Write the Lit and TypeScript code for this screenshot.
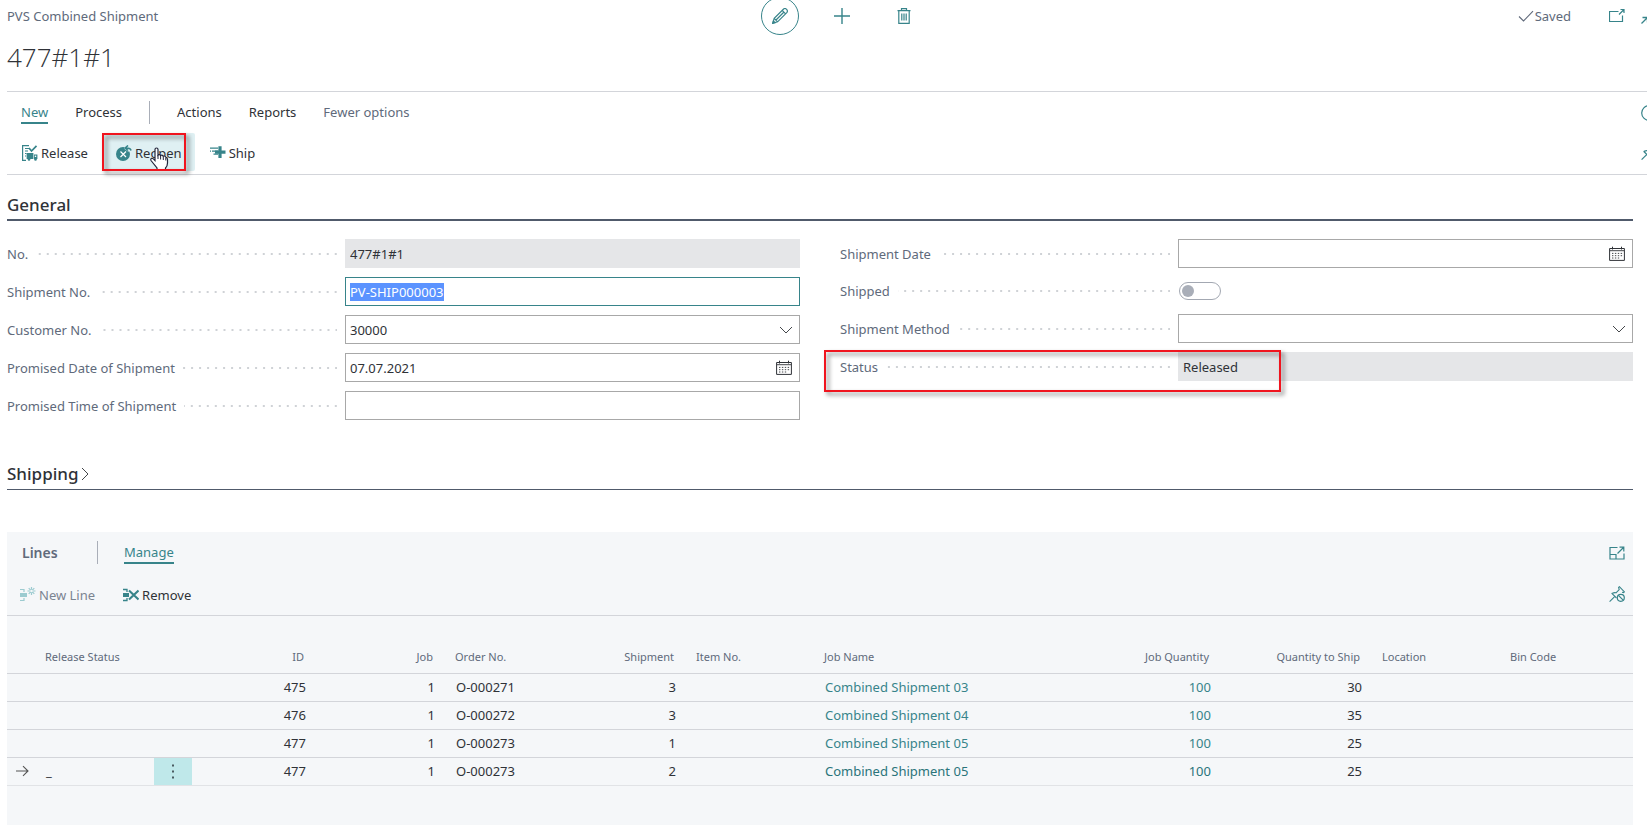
import { LitElement, html, css, svg, nothing } from "lit";
import { customElement, query } from "lit/decorators.js";
import { classMap } from "lit/directives/class-map.js";

const glyphs = {
  edit: svg`<g fill="none" stroke="currentColor" stroke-width="1.2"><path d="M0.8 15.2 2.2 10.4 11.6 1 Q13.2 -0.2 14.6 1.4 Q16 2.8 15 4.4 L5.6 13.8 Z M2.2 10.4 5.6 13.8 M10.2 2.4 13.6 5.8 M4 12 12 4"/><path d="M0.8 15.2 1.4 13 3 14.6Z" fill="currentColor"/></g>`,
  add: svg`<path d="M8 0V16M0 8H16" stroke="currentColor" stroke-width="1.4" fill="none"/>`,
  trash: svg`<path d="M1.5 2.7H14.5M5.5 2.7V0.7H10.5V2.7M2.8 2.7V15.3H13.2V2.7M5.8 5.5V12.5M8 5.5V12.5M10.2 5.5V12.5" stroke="currentColor" stroke-width="1.2" fill="none"/>`,
  check: svg`<path d="M1 8.5 5.5 13 15 3.2" stroke="currentColor" stroke-width="1.1" fill="none"/>`,
  popout: svg`<path d="M9.5 3.5H0.5V13.5H13.5V7.5M10 6.5 15 1.5M11.5 1.5H15V5" stroke="currentColor" stroke-width="1.2" fill="none"/>`,
  collapse: svg`<path d="M0.5 15.5 6 10M1.5 9.5H6.5V14.5M15.5 0.5 10 6M9.5 1.5V6.5H14.5" stroke="currentColor" stroke-width="1.3" fill="none"/>`,
  info: svg`<circle cx="8" cy="8" r="7.3" stroke="currentColor" stroke-width="1.2" fill="none"/><path d="M8 7V12M8 4V5.5" stroke="currentColor" stroke-width="1.3"/>`,
  pin: svg`<path d="M0.6 15.6 5.4 10.8M2.6 7.2 8.9 13.4M3 7.4 Q5.5 6.2 7 6.8 L10.2 3.6 9.6 1.4 10.4 0.7 15.4 5.8 14.6 6.6 12.6 6" stroke="currentColor" stroke-width="1.2" fill="none"/>`,
  unpin: svg`<path d="M0.6 15.6 5.4 10.8M2.6 7.2 7.5 12M3 7.4 Q5.5 6.2 7 6.8 L10.2 3.6 9.6 1.4 10.4 0.7 15.4 5.8 14.6 6.6 13 6.2" stroke="currentColor" stroke-width="1.1" fill="none"/><circle cx="11.8" cy="11.8" r="3.5" stroke="currentColor" stroke-width="1.2" fill="none"/><path d="M9.4 9.4 14.2 14.2" stroke="currentColor" stroke-width="1.2"/>`,
  expand: svg`<path d="M8.5 2.5H1V14H15V8.5M1 9.5H7V14M8.5 8.5 14.5 2.5M10.5 2.2H14.8V6.5" stroke="currentColor" stroke-width="1.2" fill="none"/>`,
  release: svg`<path d="M7 0.6H0.6V15.4H4M3 3.5H7M3 6H6M3 8.5H4.5M3 11H4" stroke="currentColor" stroke-width="1.2" fill="none"/><path d="M7 3 9.5 6 14.5 0.8" stroke="currentColor" stroke-width="1.7" fill="none"/><path d="M4.6 8H11.4V14H4.6ZM12 9.5H15.4V14H12Z" fill="currentColor"/><circle cx="7" cy="14.5" r="1.3" fill="currentColor"/><circle cx="13.5" cy="14.5" r="1.3" fill="currentColor"/><path d="M12.8 10.6H14.2V12H12.8Z" fill="#fff"/>`,
  reopen: svg`<circle cx="7" cy="9" r="7" fill="currentColor"/><path d="M8.5 0H16V6.5H12L8.5 4Z" fill="#dff0f3"/><path d="M4.5 6.5 10 12M10 6.5 4.5 12" stroke="#fff" stroke-width="1.2"/><path d="M15 5.5 Q14.5 2.8 10 3M12 0.5 9.2 3 12 5.5" stroke="currentColor" stroke-width="1.6" fill="none"/>`,
  ship: svg`<path d="M0 3.2H8M2 6.2H8M3.5 9.2H8M0 6.2H1" stroke="currentColor" stroke-width="1.2"/><path d="M10 1.2V13M5 7.2H15.5" stroke="currentColor" stroke-width="3.2"/>`,
  newLine: svg`<path d="M0 2.5H4V5M0 13.5H4V11" stroke="currentColor" stroke-width="1.2" fill="none"/><path d="M0 6H7V10H0Z" fill="currentColor"/><path d="M11.5 0V8M7.5 4H15.5M8.7 1.2 14.3 6.8M14.3 1.2 8.7 6.8" stroke="currentColor" stroke-width="1.2"/><circle cx="11.5" cy="4" r="1.3" fill="#f5f7f9"/>`,
  remove: svg`<path d="M0 2.5H4V5M0 13.5H4V11" stroke="currentColor" stroke-width="1.3" fill="none"/><path d="M0 6H6V10H0Z" fill="currentColor"/><path d="M6 3.5 15.5 12.5M15.5 3.5 6 12.5" stroke="currentColor" stroke-width="2.1"/>`,
  calendar: svg`<path d="M0.6 2.5H15.4V14.4H0.6Z" stroke="currentColor" stroke-width="1" fill="none"/><path d="M1 4.7H15" stroke="currentColor" stroke-width="0.9"/><path d="M3.5 0.7V3.5M12.5 0.7V3.5" stroke="currentColor" stroke-width="1"/><path d="M3 7.4H13.2M3 9.7H13.2M3 12H11" stroke="currentColor" stroke-width="0.9" stroke-dasharray="1.4 1.5"/>`,
  down: svg`<path d="M2 5 8 11 14 5" stroke="currentColor" stroke-width="0.9" fill="none"/>`,
  right: svg`<path d="M4 2 10 8 4 14" stroke="currentColor" stroke-width="0.9" fill="none"/>`,
  arrow: svg`<path d="M1 8H13M8 3.2 13 8 8 12.8" stroke="currentColor" stroke-width="1.1" fill="none"/>`,
  more: svg`<path d="M7 1.5H9V3.5H7ZM7 7.5H9V9.5H7ZM7 13.5H9V15.5H7Z" fill="currentColor"/>`,
};
type Glyph = keyof typeof glyphs;

const icon = (name: Glyph, extra = "") =>
  html`<svg class="icon ${extra}" viewBox="0 0 16 16" aria-hidden="true">${glyphs[name]}</svg>`;

type Kind = "text" | "readonly" | "date" | "select" | "toggle";
interface Field {
  id: string;
  label: string;
  kind: Kind;
  value?: string;
  marked?: boolean;
}

const leftFields: Field[] = [
  { id: "no", label: "No.", kind: "readonly", value: "477#1#1" },
  { id: "shipment-no", label: "Shipment No.", kind: "text", value: "PV-SHIP000003" },
  { id: "customer-no", label: "Customer No.", kind: "select", value: "30000" },
  { id: "promised-date", label: "Promised Date of Shipment", kind: "date", value: "07.07.2021" },
  { id: "promised-time", label: "Promised Time of Shipment", kind: "text", value: "" },
];
const rightFields: Field[] = [
  { id: "shipment-date", label: "Shipment Date", kind: "date", value: "" },
  { id: "shipped", label: "Shipped", kind: "toggle" },
  { id: "shipment-method", label: "Shipment Method", kind: "select", value: "" },
  { id: "status", label: "Status", kind: "readonly", value: "Released", marked: true },
];

interface Line {
  id: number;
  job: number;
  order: string;
  shipment: number;
  name: string;
  jobQty: number;
  shipQty: number;
  current?: boolean;
}
const lines: Line[] = [
  { id: 475, job: 1, order: "O-000271", shipment: 3, name: "Combined Shipment 03", jobQty: 100, shipQty: 30 },
  { id: 476, job: 1, order: "O-000272", shipment: 3, name: "Combined Shipment 04", jobQty: 100, shipQty: 35 },
  { id: 477, job: 1, order: "O-000273", shipment: 1, name: "Combined Shipment 05", jobQty: 100, shipQty: 25 },
  { id: 477, job: 1, order: "O-000273", shipment: 2, name: "Combined Shipment 05", jobQty: 100, shipQty: 25, current: true },
];

@customElement("app-root")
export class AppRoot extends LitElement {
  static styles = css`
    :host {
      --teal: #37848a;
      --ink: #2f3237;
      --muted: #606a7b;
      --rule: #d3d5da;
      --panel: #f5f7f9;
      display: flex;
      flex-direction: column;
      min-height: 100vh;
      box-sizing: border-box;
      padding-left: 7px;
      overflow: clip;
      background: #fff;
      color: var(--ink);
      font: 13px/20px "Noto Sans", "Open Sans", sans-serif;
    }
    * { box-sizing: border-box; }
    button, input, select { font: inherit; color: inherit; margin: 0; }
    button { background: none; border: 0; padding: 0; display: flex; align-items: center; white-space: nowrap; }
    h1, h2, h3 { margin: 0; }
    .icon { width: 16px; height: 16px; flex: none; display: block; }
    .teal { color: var(--teal); }

    .wide { margin-right: -16px; }
    .top { display: grid; grid-template: 32px / 1fr auto 1fr; align-items: center; }
    .caption { color: var(--muted); }
    .tools { display: flex; align-items: center; gap: 24px; margin-right: -14px; color: var(--teal); }
    .tools button { width: 38px; height: 38px; justify-content: center; }
    .tools .round { border: 1px solid var(--teal); border-radius: 50%; }
    .status { display: flex; justify-content: flex-end; align-items: center; padding-right: 6px; color: var(--muted); }
    .saved { display: flex; align-items: center; gap: 1px; margin-right: 38px; }
    .status .ends { display: flex; gap: 16px; color: var(--teal); }
    .title { font: 300 26px/40px "Open Sans", "Noto Sans", sans-serif; padding: 5px 0 14px; }

    .ribbon { border: solid var(--rule); border-width: 1px 0; height: 84px; padding-right: 6px; }
    .tabs, .actions { display: flex; align-items: center; justify-content: space-between; }
    .tabs { height: 41px; padding-left: 14px; }
    .tabs nav { display: flex; align-items: center; gap: 27px; }
    .tab { height: 22px; border-bottom: 2px solid transparent; }
    .tab.active { color: var(--teal); border-color: var(--teal); }
    .tab.quiet { color: var(--muted); }
    .split { width: 1px; height: 23px; background: #a9aeb8; }
    .actions { padding-left: 2px; }
    .group { display: flex; gap: 2px; }
    .action { height: 38px; padding: 1px 13px 0; gap: 3px; border-radius: 2px; }
    .action.hover { background: #dff0f3; }
    .host { position: relative; }
    .frame {
      position: absolute;
      border: 2px solid #f0141e;
      filter: drop-shadow(3px 3px 2px rgba(0, 0, 0, 0.5));
      pointer-events: none;
    }
    .frame.button { left: -1px; right: 9px; top: 0; bottom: 0; }
    .frame.row { left: -16px; width: 457px; top: -2px; height: 42px; }
    .hand { position: absolute; left: 46px; top: 14px; width: 20px; height: 24px; }

    .section { margin-right: 14px; }
    .heading {
      display: flex; align-items: center;
      font-size: 17px; line-height: 24px; font-weight: 500;
      border-bottom: 1px solid #505a6b;
    }
    .heading.open { border-bottom-width: 2px; }
    .general { margin-top: 18px; }
    .shipping { margin-top: 42px; }
    .general .heading, .shipping .heading { height: 28px; padding-bottom: 3px; }
    .fields { display: grid; grid-template-columns: 1fr 1fr; gap: 40px; padding-top: 18px; }
    .column { display: flex; flex-direction: column; gap: 9px; }
    .field { position: relative; display: grid; grid-template-columns: 338fr 455fr; align-items: center; min-height: 28px; }
    .label { display: flex; align-items: center; color: var(--muted); padding-right: 8px; gap: 8px; white-space: nowrap; }
    .dots {
      flex: 1; height: 2px;
      background: linear-gradient(90deg, transparent 6px, #cfd2d6 6px) right center / 8px 2px repeat-x;
    }
    .box { display: flex; align-items: center; position: relative; height: 29px; border: 1px solid #a8a8a8; background: #fff; }
    .box input, .box select {
      flex: 1; min-width: 0; width: 100%; height: 100%; border: 0; padding: 0 4px; background: none; outline: none; appearance: none;
      caret-color: transparent;
    }
    .box input::selection { background: #5b93ff; color: #fff; }
    .box.readonly { background: #e5e6e8; border-color: #e5e6e8; }
    .box:focus-within { border-color: var(--teal); }
    .box button { padding: 0 7px; }
    .box .over { position: absolute; right: 5px; pointer-events: none; }
    .toggle {
      appearance: none; width: 42px; height: 18px; border: 1px solid #a3a8b2; border-radius: 9px; margin: 0 0 0 1px;
      padding: 2px; display: flex; align-items: center;
    }
    .toggle::before { content: ""; width: 12px; height: 12px; border-radius: 50%; background: #a9aeb8; }

    .panel { flex: 1; margin: 42px 14px 0 0; background: var(--panel); }
    .bar { display: flex; align-items: center; justify-content: space-between; padding: 0 8px 0 15px; height: 41px; }
    .lead { display: flex; align-items: center; }
    .lead h3 { font-size: 14px; line-height: 20px; font-weight: 600; color: var(--muted); width: 75px; }
    .lead .tab { margin-left: 26px; }
    .bar.sub { height: 43px; padding-left: 0; border-bottom: 1px solid var(--rule); }
    .bar.sub .action:disabled { color: #7b8491; }
    .bar.sub .action:disabled .icon { color: #9ccbd0; }

    table { width: 100%; border-collapse: collapse; table-layout: fixed; margin-top: 31px; }
    th { height: 26px; padding: 0 11px 6px; font-size: 11px; line-height: 16px; font-weight: 400; color: var(--muted); text-align: left; white-space: nowrap; }
    td { height: 28px; padding: 0 9px 0 12px; white-space: nowrap; }
    tr { border-bottom: 1px solid var(--rule); }
    tr.current { border-color: #e1e3e6; }
    .num { text-align: right; }
    td a { color: var(--teal); text-decoration: none; }
    tr.current a { color: #2a747a; }
    td.mark { padding: 0 0 0 8px; color: #555; }
    td.menu { padding: 0; }
    td.menu button { width: 100%; height: 27px; justify-content: center; background: #bfe8ea; color: #4a5a60; }
    .c-mark { width: 27px; }
    .c-status { width: 120px; }
    .c-menu { width: 38px; }
    .c-id { width: 123px; }
    .c-order { width: 112px; }
    .c-std { width: 129px; }
    .c-text { width: 128px; }
    .c-ship { width: 151px; }
    .c-bin { width: 134px; }
  `;

  @query("#shipment-no") private shipmentNo!: HTMLInputElement;

  firstUpdated() {
    this.shipmentNo.focus();
    this.shipmentNo.select();
  }

  private control(f: Field) {
    switch (f.kind) {
      case "toggle":
        return html`<input class="toggle" type="checkbox" role="switch" id=${f.id} />`;
      case "select":
        return html`<div class="box">
          <select id=${f.id}><option>${f.value}</option></select>
          ${icon("down", "over")}
        </div>`;
      case "date":
        return html`<div class="box">
          <input id=${f.id} .value=${f.value ?? ""} />
          <button aria-label="Choose date">${icon("calendar")}</button>
        </div>`;
      default:
        return html`<div class="box ${f.kind}">
          <input id=${f.id} .value=${f.value ?? ""} ?readonly=${f.kind === "readonly"} />
        </div>`;
    }
  }

  private field(f: Field) {
    return html`<div class="field">
      <label class="label" for=${f.id}><span>${f.label}</span><span class="dots"></span></label>
      ${this.control(f)}
      ${f.marked ? html`<span class="frame row"></span>` : nothing}
    </div>`;
  }

  private line(l: Line) {
    return html`<tr class=${classMap({ current: !!l.current })}>
      <td class="mark">${l.current ? icon("arrow") : nothing}</td>
      <td>${l.current ? "_" : nothing}</td>
      <td class="menu">${l.current ? html`<button aria-label="Show more options">${icon("more")}</button>` : nothing}</td>
      <td class="num">${l.id}</td>
      <td class="num">${l.job}</td>
      <td>${l.order}</td>
      <td class="num">${l.shipment}</td>
      <td></td>
      <td><a href="#">${l.name}</a></td>
      <td class="num"><a href="#">${l.jobQty}</a></td>
      <td class="num">${l.shipQty}</td>
      <td></td>
      <td></td>
    </tr>`;
  }

  render() {
    return html`
      <header class="top wide">
        <span class="caption">PVS Combined Shipment</span>
        <div class="tools">
          <button class="round" aria-label="Edit">${icon("edit")}</button>
          <button aria-label="New">${icon("add")}</button>
          <button aria-label="Delete">${icon("trash")}</button>
        </div>
        <div class="status">
          <span class="saved">${icon("check")}<span>Saved</span></span>
          <div class="ends">
            <button aria-label="Open in new window">${icon("popout")}</button>
            <button aria-label="Collapse">${icon("collapse")}</button>
          </div>
        </div>
      </header>
      <h1 class="title">477#1#1</h1>

      <div class="ribbon wide">
        <div class="tabs">
          <nav>
            <button class="tab active">New</button>
            <button class="tab">Process</button>
            <span class="split"></span>
            <button class="tab">Actions</button>
            <button class="tab">Reports</button>
            <button class="tab quiet">Fewer options</button>
          </nav>
          <button class="teal" aria-label="Details">${icon("info")}</button>
        </div>
        <div class="actions">
          <div class="group">
            <button class="action">${icon("release", "teal")}<span>Release</span></button>
            <div class="host">
              <button class="action hover">${icon("reopen", "teal")}<span>Reopen</span></button>
              <svg class="hand" viewBox="0 0 20 24" aria-hidden="true">
                <path d="M6 2.5Q6 1 7.5 1T9 2.5V8Q10 6.8 11.5 8.5Q13 7.5 14.2 9.2Q16 8.5 17 10.3Q18.5 10.5 18.5 12.5V16Q18.5 19 16.5 21V23H8V21L2 13.5Q1.2 12 2.5 11.3Q3.8 11 6 13.5Z" fill="#fff" stroke="#22253a" stroke-width="1.2" />
                <path d="M9 8V12M11.6 8.6V12.5M14.3 9.4V13M16.8 10.5V13.5" stroke="#22253a" stroke-width="1" />
              </svg>
              <span class="frame button"></span>
            </div>
            <button class="action">${icon("ship", "teal")}<span>Ship</span></button>
          </div>
          <button class="teal" aria-label="Pin">${icon("pin")}</button>
        </div>
      </div>

      <section class="section general">
        <h2 class="heading open">General</h2>
        <div class="fields">
          <div class="column">${leftFields.map((f) => this.field(f))}</div>
          <div class="column">${rightFields.map((f) => this.field(f))}</div>
        </div>
      </section>

      <section class="section shipping">
        <h2 class="heading">Shipping${icon("right")}</h2>
      </section>

      <section class="panel">
        <div class="bar">
          <div class="lead">
            <h3>Lines</h3>
            <span class="split"></span>
            <button class="tab active">Manage</button>
          </div>
          <button class="teal" aria-label="Expand">${icon("expand")}</button>
        </div>
        <div class="bar sub">
          <div class="group">
            <button class="action" disabled>${icon("newLine")}<span>New Line</span></button>
            <button class="action">${icon("remove", "teal")}<span>Remove</span></button>
          </div>
          <button class="teal" aria-label="Unpin">${icon("unpin")}</button>
        </div>
        <table>
          <colgroup>
            <col class="c-mark" /><col class="c-status" /><col class="c-menu" /><col class="c-id" /><col class="c-std" />
            <col class="c-order" /><col class="c-std" /><col class="c-text" /><col /><col class="c-std" />
            <col class="c-ship" /><col class="c-text" /><col class="c-bin" />
          </colgroup>
          <thead>
            <tr>
              <th></th>
              <th>Release Status</th>
              <th></th>
              <th class="num">ID</th>
              <th class="num">Job</th>
              <th>Order No.</th>
              <th class="num">Shipment</th>
              <th>Item No.</th>
              <th>Job Name</th>
              <th class="num">Job Quantity</th>
              <th class="num">Quantity to Ship</th>
              <th>Location</th>
              <th>Bin Code</th>
            </tr>
          </thead>
          <tbody>${lines.map((l) => this.line(l))}</tbody>
        </table>
      </section>
    `;
  }
}
